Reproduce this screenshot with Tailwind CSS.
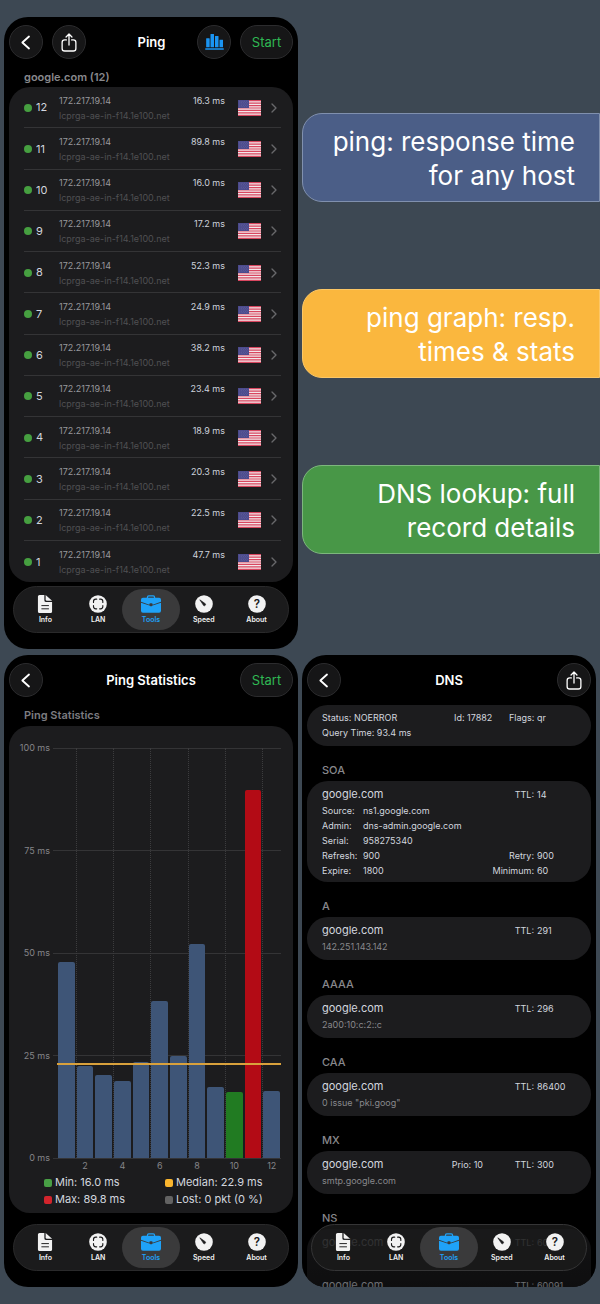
<!DOCTYPE html>
<html lang="en">
<head>
  <meta charset="UTF-8" />
  <meta name="viewport" content="width=device-width, initial-scale=1.0"/>
  <title>Network Tools</title>
  <script src="https://cdn.jsdelivr.net/npm/@tailwindcss/browser@4"></script>
</head>
<body class="bg-[#3d4853] text-white font-['Inter','Liberation_Sans',sans-serif]">

  <!-- Icons -->
  <svg class="hidden" aria-hidden="true">
    <symbol id="i-back" viewBox="0 0 30 44" fill="none" stroke="currentColor" stroke-width="5.5" stroke-linecap="round" stroke-linejoin="round">
      <path d="M24 4L4 22l20 18" />
    </symbol>
    <symbol id="i-share" viewBox="0 0 48 58" fill="none" stroke="currentColor" stroke-width="4" stroke-linecap="round" stroke-linejoin="round">
      <path d="M16 21h-5a8 8 0 0 0-8 8v18a8 8 0 0 0 8 8h26a8 8 0 0 0 8-8V29a8 8 0 0 0-8-8h-5" />
      <path d="M24 37V4M15 12l9-9 9 9" />
    </symbol>
    <symbol id="i-chart" viewBox="0 0 56 48" fill="currentColor">
      <rect x="3" y="13" width="10.500" height="27" rx="1" />
      <rect x="16" y="0" width="10.500" height="40" rx="1" />
      <rect x="29.500" y="6" width="10.500" height="34" rx="1" />
      <rect x="43" y="17" width="10.500" height="23" rx="1" />
      <rect x="0" y="43" width="56" height="4" rx="1" />
    </symbol>
    <symbol id="i-chevron" viewBox="0 0 18 30" fill="none" stroke="currentColor" stroke-width="4" stroke-linecap="round" stroke-linejoin="round">
      <path d="M3 3l12 12L3 27" />
    </symbol>
    <symbol id="i-info" viewBox="0 0 56 56">
      <path fill="currentColor" d="M11 0h15v16a6 6 0 0 0 6 6h18v29a5 5 0 0 1-5 5H11a5 5 0 0 1-5-5V5a5 5 0 0 1 5-5z" />
      <path fill="currentColor" d="M30 0l20 18H34a4 4 0 0 1-4-4z" />
      <path stroke="#1b1b1c" stroke-width="3" stroke-linecap="round" d="M18 33h21M18 43h21" />
    </symbol>
    <symbol id="i-lan" viewBox="0 0 56 56">
      <circle cx="28" cy="28" r="27.500" fill="currentColor" />
      <path fill="none" stroke="#1b1b1c" stroke-width="3.500" stroke-linecap="round" d="M14 23v-3a7 7 0 0 1 7-7h3M33 13h3a7 7 0 0 1 7 7v3M43 33v3a7 7 0 0 1-7 7h-3M24 43h-3a7 7 0 0 1-7-7v-3" />
    </symbol>
    <symbol id="i-tools" viewBox="0 0 62 54">
      <path fill="none" stroke="currentColor" stroke-width="4" d="M20 10V6a4 4 0 0 1 4-4h14a4 4 0 0 1 4 4v4" />
      <path fill="currentColor" d="M6 8h50a6 6 0 0 1 6 6v6L36 29v-1a3 3 0 0 0-3-3h-4a3 3 0 0 0-3 3v1L0 20v-6a6 6 0 0 1 6-6z" />
      <path fill="currentColor" d="M0 23l26 9a7 7 0 0 0 10 0l26-9v25a6 6 0 0 1-6 6H6a6 6 0 0 1-6-6z" />
    </symbol>
    <symbol id="i-speed" viewBox="0 0 56 56">
      <circle cx="28" cy="28" r="27.500" fill="currentColor" />
      <path fill="#1b1b1c" stroke="#1b1b1c" stroke-width="2" stroke-linejoin="round" d="M15 15l17 12a4 4 0 0 1-5 6z" />
    </symbol>
    <symbol id="i-about" viewBox="0 0 56 56">
      <circle cx="28" cy="28" r="27.500" fill="currentColor" />
      <text x="28" y="41" text-anchor="middle" font-size="36" font-weight="600" fill="#1b1b1c">?</text>
    </symbol>
    <symbol id="i-flag" viewBox="0 0 69 48" preserveAspectRatio="none">
      <rect width="69" height="48" fill="#f3e6e9" />
      <path stroke="#d8465f" stroke-width="3.700" d="M0 1.850h69M0 9.230h69M0 16.610h69M0 24h69M0 31.380h69M0 38.760h69M0 46.150h69" />
      <rect width="33" height="24" fill="#4b4a8c" />
      <path stroke="#8f8fbd" stroke-width="1.500" stroke-dasharray="1.500 4" d="M3 4h28M5 8h26M3 12h28M5 16h26M3 20h28" />
    </symbol>
  </svg>

  <main class="grid grid-cols-2 grid-rows-2 h-screen gap-x-1 gap-y-1.5 px-1 py-[17px]">

    <!-- Ping -->
    <section class="flex flex-col min-h-0 overflow-hidden rounded-3xl bg-black px-[5px] pt-2 pb-4">
      <header class="flex items-center gap-[9px]">
        <button aria-label="Back" class="flex size-[34px] items-center justify-center rounded-full border border-[#2c2c2e] bg-[#161617]">
          <svg class="h-[15px] w-[10px]"><use href="#i-back" /></svg>
        </button>
        <button aria-label="Share" class="flex size-[34px] items-center justify-center rounded-full border border-[#2c2c2e] bg-[#161617]">
          <svg class="h-[19px] w-4"><use href="#i-share" /></svg>
        </button>
        <h1 class="flex-1 pt-px pl-5 text-center text-[13px] font-semibold">Ping</h1>
        <button aria-label="Statistics" class="flex size-[34px] items-center justify-center rounded-full border border-[#2c2c2e] bg-[#161617] text-[#1a94f2]">
          <svg class="h-4 w-[19px]"><use href="#i-chart" /></svg>
        </button>
        <button class="h-[34px] w-[53px] rounded-full border border-[#2c2c2e] bg-[#161617] pt-px text-[13px] text-[#2fb853]">Start</button>
      </header>
      <h2 class="mt-2.5 mb-0.5 pl-[15px] text-[11px] leading-4 font-semibold text-[#88888c]">google.com (12)</h2>
      <ul id="pings" class="grid flex-1 auto-rows-fr min-h-0 overflow-hidden rounded-[21px] bg-[#1c1c1e] pr-3 pl-[15px]"></ul>
      <nav class="tabs mx-1 mt-1 flex rounded-full border border-[#2a2a2b] bg-[#1b1b1c] px-[5px]"></nav>
    </section>

    <!-- Captions -->
    <section class="-mr-1 flex flex-col justify-center gap-[87px] text-right text-[26px] leading-[34px]">
      <p class="rounded-l-[20px] border border-[#8090ae] bg-[#4b5e87] pt-[11px] pr-6 pb-2 pl-4">ping: response time<br>for any host</p>
      <p class="rounded-l-[20px] border border-[#fcc766] bg-[#fab73e] pt-[11px] pr-6 pb-2 pl-4">ping graph: resp.<br>times &amp; stats</p>
      <p class="rounded-l-[20px] border border-[#7db77d] bg-[#489747] pt-[11px] pr-6 pb-2 pl-4">DNS lookup: full<br>record details</p>
    </section>

    <!-- Ping Statistics -->
    <section class="flex flex-col min-h-0 overflow-hidden rounded-3xl bg-black px-[5px] pt-2 pb-4">
      <header class="flex items-center">
        <button aria-label="Back" class="mr-[19px] flex size-[34px] items-center justify-center rounded-full border border-[#2c2c2e] bg-[#161617]">
          <svg class="h-[15px] w-[10px]"><use href="#i-back" /></svg>
        </button>
        <h1 class="flex-1 pt-px text-center text-[13px] font-semibold">Ping Statistics</h1>
        <button class="h-[34px] w-[53px] rounded-full border border-[#2c2c2e] bg-[#161617] pt-px text-[13px] text-[#2fb853]">Start</button>
      </header>
      <h2 class="mt-2.5 mb-[3px] pl-[15px] text-[11px] leading-4 font-semibold text-[#7c7c80]">Ping Statistics</h2>
      <div class="flex flex-1 flex-col rounded-[21px] bg-[#1c1c1e] pt-[22px] pb-[5px]">
        <div class="relative flex-1">
          <div id="grid" class="absolute inset-0 flex flex-col justify-between"></div>
          <div id="bars" class="absolute inset-y-0 right-3 left-12 flex"></div>
          <div id="median" class="absolute right-3 left-12 h-0.5 translate-y-1/2 bg-[#d9a13c]"></div>
        </div>
        <div id="xaxis" class="mt-0.5 mr-3 ml-12 flex h-3 text-center text-[9px] leading-3 text-[#858589]"></div>
        <ul class="mt-0.5 ml-[35px] grid grid-cols-[121px_1fr] text-[11px] leading-[17px] text-[#d2d6de]">
          <li class="flex items-center gap-[3px]"><span class="size-2 rounded-xs bg-[#489f45]"></span>Min: 16.0 ms</li>
          <li class="flex items-center gap-[3px]"><span class="size-2 rounded-xs bg-[#fab52e]"></span>Median: 22.9 ms</li>
          <li class="flex items-center gap-[3px]"><span class="size-2 rounded-xs bg-[#d2242c]"></span>Max: 89.8 ms</li>
          <li class="flex items-center gap-[3px]"><span class="size-2 rounded-xs bg-[#636363]"></span>Lost: 0 pkt (0 %)</li>
        </ul>
      </div>
      <nav class="tabs mx-1 mt-[11px] flex rounded-full border border-[#2a2a2b] bg-[#1b1b1c] px-[5px]"></nav>
    </section>

    <!-- DNS -->
    <section class="relative flex flex-col min-h-0 overflow-hidden rounded-3xl bg-black px-[5px] pt-2">
      <header class="flex items-center">
        <button aria-label="Back" class="flex size-[34px] items-center justify-center rounded-full border border-[#2c2c2e] bg-[#161617]">
          <svg class="h-[15px] w-[10px]"><use href="#i-back" /></svg>
        </button>
        <h1 class="flex-1 pt-px text-center text-[13px] font-semibold">DNS</h1>
        <button aria-label="Share" class="flex size-[34px] items-center justify-center rounded-full border border-[#2c2c2e] bg-[#161617]">
          <svg class="h-[19px] w-4"><use href="#i-share" /></svg>
        </button>
      </header>

      <div class="mt-2 min-h-0 flex-1 overflow-hidden text-[9px] leading-[15px] text-[#d2d6de]">
        <div class="rounded-[21px] bg-[#1c1c1e] px-[15px] pt-[5px] pb-1.5">
          <div class="flex">
            <span class="flex-1">Status: NOERROR</span>
            <span class="w-[55px]">Id: 17882</span>
            <span class="w-[67px]">Flags: qr</span>
          </div>
          <div>Query Time: 93.4 ms</div>
        </div>

        <h2 class="mt-4 mb-[3px] pl-[15px] text-[11px] leading-4 font-medium text-[#88888c]">SOA</h2>
        <div class="rounded-[21px] bg-[#1c1c1e] px-[15px] pt-[5px] pb-1">
          <div class="flex leading-[17px]">
            <span class="flex-1 text-[11px]">google.com</span>
            <span>TTL:</span><span class="w-[42px] pl-[3px]">14</span>
          </div>
          <dl class="grid grid-cols-[41px_1fr_auto_42px]">
            <dt>Source:</dt><dd class="col-span-3">ns1.google.com</dd>
            <dt>Admin:</dt><dd class="col-span-3">dns-admin.google.com</dd>
            <dt>Serial:</dt><dd class="col-span-3">958275340</dd>
            <dt>Refresh:</dt><dd>900</dd><dt class="text-right">Retry:</dt><dd class="pl-[3px]">900</dd>
            <dt>Expire:</dt><dd>1800</dd><dt class="text-right">Minimum:</dt><dd class="pl-[3px]">60</dd>
          </dl>
        </div>

        <div id="records"></div>
      </div>

      <div class="absolute inset-x-0 bottom-0 h-[66px] bg-linear-to-b from-black/30 to-black/50"></div>
      <nav class="tabs absolute inset-x-[9px] bottom-4 flex rounded-full border border-[#353536] bg-[#1b1b1c]/80 px-[5px]"></nav>
    </section>
  </main>

  <script>
    const times = [47.7, 22.5, 20.3, 18.9, 23.4, 38.2, 24.9, 52.3, 17.2, 16.0, 89.8, 16.3];
    const median = 22.9;

    const tabs = [
      { id: 'info', name: 'Info' },
      { id: 'lan', name: 'LAN' },
      { id: 'tools', name: 'Tools' },
      { id: 'speed', name: 'Speed' },
      { id: 'about', name: 'About' }
    ];

    const records = [
      { type: 'A', ttl: 291, rows: ['142.251.143.142'] },
      { type: 'AAAA', ttl: 296, rows: ['2a00:10:c:2::c'] },
      { type: 'CAA', ttl: 86400, rows: ['0 issue "pki.goog"'] },
      { type: 'MX', ttl: 300, prio: 10, rows: ['smtp.google.com'] },
      { type: 'NS', ttl: 60091, rows: ['', ''] }
    ];

    // ping list, newest first
    document.getElementById('pings').innerHTML = times.map((ms, i) => `
      <li class="flex items-center border-b border-[#343436] pt-px last:border-b-0">
        <span class="size-2 rounded-full bg-[#469f40]"></span>
        <span class="w-[27px] pl-1 text-[11px] text-[#d2d6de]">${i + 1}</span>
        <div class="flex-1 text-[9px] leading-[15px]">
          <div class="flex justify-between">
            <span class="text-[#98989c]">172.217.19.14</span>
            <span class="text-[#ccd2dc]">${ms.toFixed(1)} ms</span>
          </div>
          <div class="text-[#505053]">lcprga-ae-in-f14.1e100.net</div>
        </div>
        <svg class="ml-[13px] h-4 w-[23px]" role="img" aria-label="United States"><use href="#i-flag" /></svg>
        <svg class="mr-1 ml-2.5 h-[10px] w-1.5 text-[#68686b]"><use href="#i-chevron" /></svg>
      </li>`).reverse().join('');

    // chart
    document.getElementById('grid').innerHTML = [100, 75, 50, 25, 0].map(v => `
      <div class="flex h-0 items-center gap-[3px] pr-3">
        <span class="w-[41px] text-right text-[9px] text-[#858589]">${v} ms</span>
        <span class="h-px flex-1 bg-[#343436]"></span>
      </div>`).join('');

    const min = Math.min(...times);
    const max = Math.max(...times);
    document.getElementById('bars').innerHTML = times.map((ms, i) => {
      const color = ms === max ? 'bg-[#b30b15]' : ms === min ? 'bg-[#217b22]' : 'bg-[#3e5577]';
      const line = i % 2 ? 'border-dotted border-[#3c3c3e]' : 'border-transparent';
      return `
      <div class="flex flex-1 items-end border-l pr-px ${line}">
        <div class="w-full rounded-t-xs ${color}" style="height: ${ms}%"></div>
      </div>`;
    }).join('');
    document.getElementById('median').style.bottom = median + '%';
    document.getElementById('xaxis').innerHTML = times.map((ms, i) =>
      `<span class="flex-1">${i % 2 ? i + 1 : ''}</span>`).join('');

    // DNS records
    document.getElementById('records').innerHTML = records.map(r => `
      <h2 class="mt-4 mb-[3px] pl-[15px] text-[11px] leading-4 font-medium text-[#88888c]">${r.type}</h2>
      <div class="rounded-[21px] bg-[#1c1c1e] px-[15px]">
        ${r.rows.map(value => `
        <div class="pt-[5px] pb-1.5">
          <div class="flex leading-[17px]">
            <span class="flex-1 text-[11px]">google.com</span>
            ${r.prio ? `<span class="w-[63px]">Prio: ${r.prio}</span>` : ''}
            <span>TTL:</span><span class="w-[42px] pl-[3px]">${r.ttl}</span>
          </div>
          <div class="h-[15px] text-[#88888c]">${value}</div>
        </div>`).join('')}
      </div>`).join('');

    document.querySelectorAll('.tabs').forEach(nav => {
      nav.innerHTML = tabs.map(t => {
        const active = t.id === 'tools';
        return `
        <button class="relative flex flex-1 flex-col items-center gap-0.5 pt-2 pb-[7px] ${active ? 'text-[#1fa2f8]' : 'text-[#f2f2f2]'}">
          ${active ? '<span class="absolute -inset-x-[3px] inset-y-0.5 rounded-full bg-[#3a3a3b]"></span>' : ''}
          <svg class="relative h-[18px] w-5"><use href="#i-${t.id}" /></svg>
          <span class="relative text-[7px] leading-[10px] font-semibold">${t.name}</span>
        </button>`;
      }).join('');
    });
  </script>
</body>
</html>
